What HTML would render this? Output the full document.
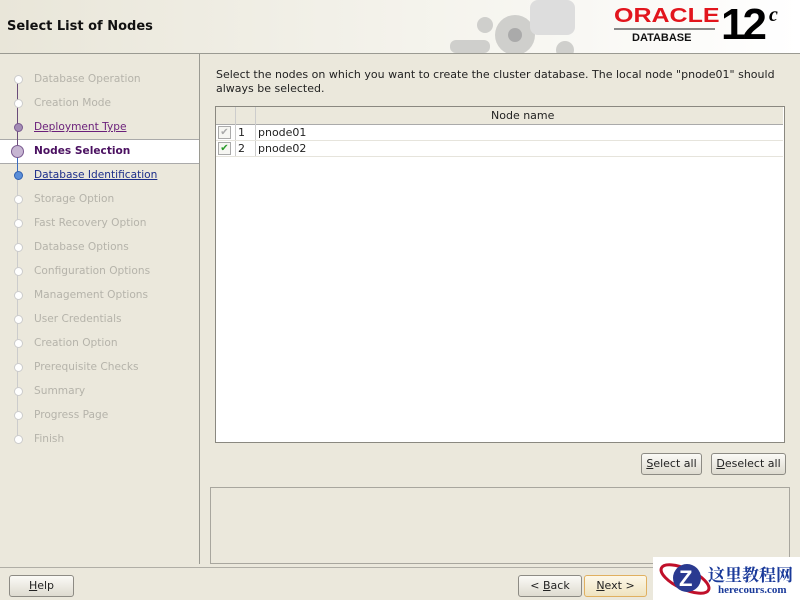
<!DOCTYPE html>
<html><head><style>
body{margin:0;width:800px;height:600px;position:relative;background:#ebe8dc;font-family:"DejaVu Sans","Liberation Sans",sans-serif;font-size:11px;overflow:hidden;color:#222}
.a{position:absolute}
.hdr{left:0;top:0;width:800px;height:53px;background:linear-gradient(90deg,#e9e6d9,#f6f5ef 60%,#fff);border-bottom:1px solid #9a9a92}
.side{left:0;top:54px;width:199px;height:510px;border-right:1px solid #9a9a92}
.it{position:absolute;left:34px;color:#b5b3aa;font-size:10.6px}
.dot{position:absolute;left:14px;width:7px;height:7px;border-radius:50%;background:#fff;border:1px solid #ccc}
.btn{position:absolute;height:20px;border:1px solid #8d8b84;border-radius:3px;background:linear-gradient(#fbfaf6,#dedbd0);text-align:center;line-height:20px;font-size:11px;color:#222}
.cb{position:absolute;left:218px;width:11px;height:11px;border:1px solid #aaa;background:#f6f6f2;font-size:10px;line-height:11px;text-align:center}
</style></head><body>
<div class="a hdr"></div>
<div class="a" style="left:7px;top:19px;font-size:13px;font-weight:bold;color:#111">Select List of Nodes</div>
<svg class="a" style="left:440px;top:0" width="150" height="53"><g fill="#cfcfcc"><circle cx="75" cy="35" r="20"/><circle cx="45" cy="25" r="8"/><rect x="10" y="40" width="40" height="13" rx="6"/><rect x="90" y="0" width="45" height="35" rx="8" fill="#ddd"/><circle cx="125" cy="50" r="9"/></g><circle cx="75" cy="35" r="7" fill="#aaa"/></svg>
<div class="a" style="left:614px;top:5px;font-family:'Liberation Sans',sans-serif;font-weight:bold;font-size:20px;color:#e2151d;transform:scaleX(1.25);transform-origin:left">ORACLE</div>
<div class="a" style="left:614px;top:28px;width:101px;height:2px;background:#888"></div>
<div class="a" style="left:632px;top:32px;font-family:'Liberation Sans',sans-serif;font-weight:bold;font-size:11px;color:#111">DATABASE</div>
<div class="a" style="left:721px;top:0px;font-family:'Liberation Sans',sans-serif;font-weight:bold;font-size:44px;color:#000;letter-spacing:-3px">12</div>
<div class="a" style="left:769px;top:4px;font-family:'Liberation Serif',serif;font-style:italic;font-weight:bold;font-size:20px;color:#000">c</div>
<div class="a side"></div>
<div class="a" style="left:0;top:139px;width:199px;height:23px;background:#fff;border-top:1px solid #aaa;border-bottom:1px solid #aaa"></div>
<div class="a" style="left:17px;top:80px;width:1px;height:360px;background:#ccc"></div>
<div class="a" style="left:17px;top:80px;width:1px;height:95px;background:#6a4c7a"></div>
<div class="a" style="left:17px;top:150px;width:1px;height:25px;background:#3c6dc0"></div>
<div class="dot" style="top:75px"></div><div class="it" style="top:73px">Database Operation</div>
<div class="dot" style="top:99px"></div><div class="it" style="top:97px">Creation Mode</div>
<div class="dot" style="top:123px;background:#a38cb5;border-color:#7a5a90"></div><div class="it" style="top:121px;color:#6a1f7a;text-decoration:underline">Deployment Type</div>
<div class="dot" style="top:145px;left:11px;width:11px;height:11px;background:#c6b5d2;border-color:#7a5a90"></div><div class="it" style="top:145px;color:#4a1060;font-weight:bold">Nodes Selection</div>
<div class="dot" style="top:171px;background:#5a8ed8;border-color:#3060b0"></div><div class="it" style="top:169px;color:#1c2e8a;text-decoration:underline">Database Identification</div>
<div class="dot" style="top:195px"></div><div class="it" style="top:193px">Storage Option</div>
<div class="dot" style="top:219px"></div><div class="it" style="top:217px">Fast Recovery Option</div>
<div class="dot" style="top:243px"></div><div class="it" style="top:241px">Database Options</div>
<div class="dot" style="top:267px"></div><div class="it" style="top:265px">Configuration Options</div>
<div class="dot" style="top:291px"></div><div class="it" style="top:289px">Management Options</div>
<div class="dot" style="top:315px"></div><div class="it" style="top:313px">User Credentials</div>
<div class="dot" style="top:339px"></div><div class="it" style="top:337px">Creation Option</div>
<div class="dot" style="top:363px"></div><div class="it" style="top:361px">Prerequisite Checks</div>
<div class="dot" style="top:387px"></div><div class="it" style="top:385px">Summary</div>
<div class="dot" style="top:411px"></div><div class="it" style="top:409px">Progress Page</div>
<div class="dot" style="top:435px"></div><div class="it" style="top:433px">Finish</div>
<div class="a" style="left:216px;top:68px;line-height:14px;width:570px">Select the nodes on which you want to create the cluster database. The local node "pnode01" should always be selected.</div>
<div class="a" style="left:215px;top:106px;width:568px;height:335px;background:#fff;border:1px solid #8a8880"></div>
<div class="a" style="left:216px;top:107px;width:567px;height:17px;background:#ebe8dc;border-bottom:1px solid #aaa"></div>
<div class="a" style="left:235px;top:107px;width:1px;height:49px;background:#ccc"></div>
<div class="a" style="left:255px;top:107px;width:1px;height:49px;background:#ccc"></div>
<div class="a" style="left:216px;top:140px;width:567px;height:1px;background:#e6e4dc"></div>
<div class="a" style="left:216px;top:156px;width:567px;height:1px;background:#e6e4dc"></div>
<div class="a" style="left:491px;top:109px">Node name</div>
<div class="cb" style="top:126px;color:#aaa">✔</div><div class="a" style="left:238px;top:126px">1</div><div class="a" style="left:258px;top:126px">pnode01</div>
<div class="cb" style="top:142px;color:#2a9a2a">✔</div><div class="a" style="left:238px;top:142px">2</div><div class="a" style="left:258px;top:142px">pnode02</div>
<div class="btn" style="left:641px;top:453px;width:59px"><u>S</u>elect all</div>
<div class="btn" style="left:711px;top:453px;width:73px"><u>D</u>eselect all</div>
<div class="a" style="left:210px;top:487px;width:578px;height:75px;border:1px solid #a8a69e"></div>
<div class="a" style="left:0;top:567px;width:800px;height:1px;background:#b0aea6"></div>
<div class="btn" style="left:9px;top:575px;width:63px"><u>H</u>elp</div>
<div class="btn" style="left:518px;top:575px;width:62px">&lt; <u>B</u>ack</div>
<div class="btn" style="left:584px;top:575px;width:61px;border-color:#e0b060;background:linear-gradient(#fdf8e8,#efe3c0)"><u>N</u>ext &gt;</div>
<div class="a" style="left:653px;top:557px;width:147px;height:43px;background:#fff"></div>
<svg class="a" style="left:655px;top:558px" width="60" height="42"><ellipse cx="30" cy="21" rx="26" ry="10" fill="none" stroke="#c0102a" stroke-width="3" transform="rotate(25 30 21)"/><circle cx="32" cy="20" r="14" fill="#2a3a90"/><text x="24" y="28" font-family="Liberation Sans" font-weight="bold" font-size="22" fill="#fff">Z</text></svg>
<div class="a" style="left:708px;top:561px;font-family:'Noto Serif CJK SC',serif;font-weight:bold;font-size:17px;color:#1a3a9a">这里教程网</div>
<div class="a" style="left:718px;top:584px;font-family:'Liberation Serif',serif;font-weight:bold;font-size:11px;color:#1a3a9a">herecours.com</div>
</body></html>
